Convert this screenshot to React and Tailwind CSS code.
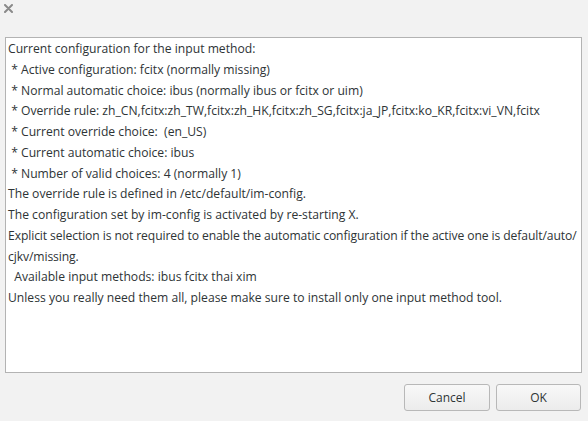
const lines = [
  "Current configuration for the input method:",
  " * Active configuration: fcitx (normally missing)",
  " * Normal automatic choice: ibus (normally ibus or fcitx or uim)",
  " * Override rule: zh_CN,fcitx:zh_TW,fcitx:zh_HK,fcitx:zh_SG,fcitx:ja_JP,fcitx:ko_KR,fcitx:vi_VN,fcitx",
  " * Current override choice:  (en_US)",
  " * Current automatic choice: ibus",
  " * Number of valid choices: 4 (normally 1)",
  "The override rule is defined in /etc/default/im-config.",
  "The configuration set by im-config is activated by re-starting X.",
  "Explicit selection is not required to enable the automatic configuration if the active one is default/auto/\ncjkv/missing.",
  "  Available input methods: ibus fcitx thai xim",
  "Unless you really need them all, please make sure to install only one input method tool.",
];

export default function App() {
  return (
    <div
      className="w-[588px] h-[421px] bg-[#f2f2f2] flex flex-col text-[#2e3436]"
      style={{ fontFamily: '"Open Sans", "Noto Sans", sans-serif' }}
    >
      {/* Title bar */}
      <div className="h-[37px] flex items-start px-[4px] pt-[3px]">
        <svg width="9" height="9" viewBox="0 0 9 9" className="mt-[1px]">
          <path d="M1 1 L8 8 M8 1 L1 8" stroke="#8a8a8a" strokeWidth="2" strokeLinecap="round" />
        </svg>
      </div>

      {/* Message box */}
      <div className="mx-[5px] w-[577px] h-[336px] bg-white border border-[#b3b3b3] pl-[2px] pt-[1px] text-[12.15px] leading-[20.75px] whitespace-pre overflow-hidden">
        {lines.map((l, i) => (
          <div key={i} className={i === 9 ? "tracking-[-0.1px]" : ""}>
            {l}
          </div>
        ))}
      </div>

      {/* Buttons */}
      <div className="flex justify-end gap-[6px] pr-[7px] pt-[11px]">
        <button className="w-[86px] h-[27px] rounded-[3px] border border-[#b8b8b8] bg-gradient-to-b from-[#f8f8f8] to-[#ececec] text-[12px] text-[#2e3436]">
          Cancel
        </button>
        <button className="w-[85px] h-[27px] rounded-[3px] border border-[#b8b8b8] bg-gradient-to-b from-[#f8f8f8] to-[#ececec] text-[12px] text-[#2e3436]">
          OK
        </button>
      </div>
    </div>
  );
}
